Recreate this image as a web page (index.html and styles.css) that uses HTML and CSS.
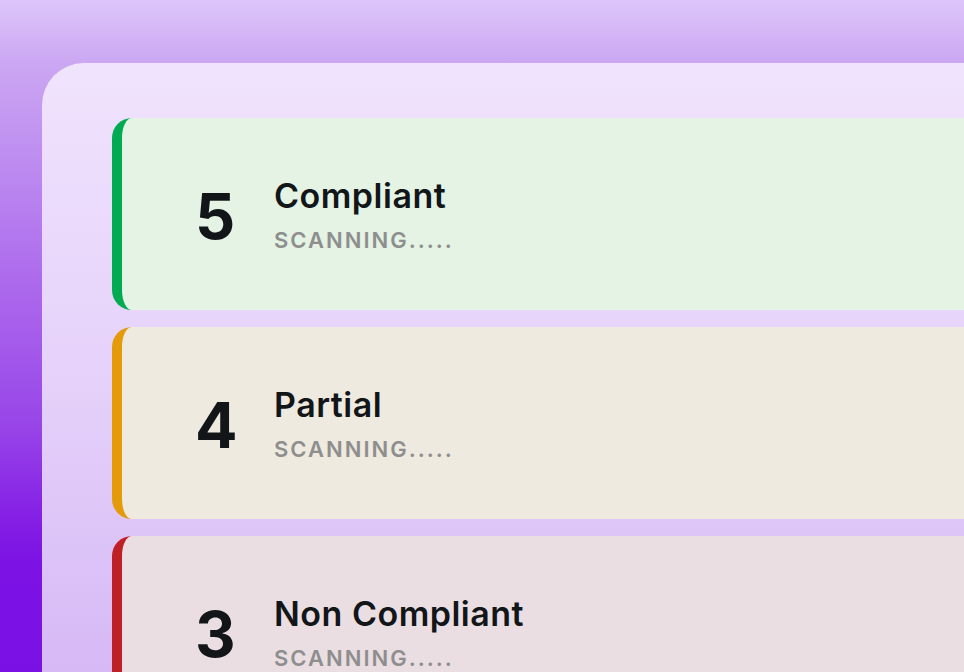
FILE: index.html
```html
<!DOCTYPE html>
<html lang="en">
<head>
<meta charset="utf-8">
<title>Compliance</title>
<link rel="stylesheet" href="styles.css">
</head>
<body>
<div class="stage">
  <div class="panel">
    <div class="card card-green">
      <div class="count">5</div>
      <div class="info">
        <div class="title">Compliant</div>
        <div class="status">SCANNING.....</div>
      </div>
    </div>
    <div class="card card-orange">
      <div class="count">4</div>
      <div class="info">
        <div class="title">Partial</div>
        <div class="status">SCANNING.....</div>
      </div>
    </div>
    <div class="card card-red">
      <div class="count">3</div>
      <div class="info">
        <div class="title">Non Compliant</div>
        <div class="status">SCANNING.....</div>
      </div>
    </div>
  </div>
</div>
</body>
</html>
```

FILE: styles.css
```css
html, body {
  margin: 0;
  padding: 0;
  width: 964px;
  height: 672px;
  overflow: hidden;
}
body {
  font-family: Inter, "Noto Sans", sans-serif;
  background: linear-gradient(180deg, #ddc5f9 0%, #cca8f3 9%, #bd8cf0 24%, #ab66ec 44%, #9846e8 63%, #8622e5 76%, #7c12e4 84%, #7a10e4 100%);
}
.stage {
  padding: 63px 0 0 42px;
  height: 672px;
  box-sizing: border-box;
}
.panel {
  height: 100%;
  border-top-left-radius: 42px;
  background: linear-gradient(180deg, #f0e4fd 0%, #ecdcfc 20%, #e6d2fa 50%, #dec6f8 75%, #d6b8f5 100%);
  padding: 55px 0 0 70px;
  box-sizing: border-box;
  display: flex;
  flex-direction: column;
  gap: 17px;
}
.card {
  height: 192px;
  flex: none;
  box-sizing: border-box;
  border-radius: 20px 0 0 20px;
  border-left: 10px solid;
  display: flex;
  align-items: center;
  padding-left: 73px;
}
.card-green { background: #e4f3e4; border-left-color: #00ab52; }
.card-orange { background: #eeeadf; border-left-color: #e39b0a; }
.card-red { background: #eadee2; border-left-color: #be2026; }
.count {
  width: 79px;
  font-size: 63px;
  font-weight: 700;
  color: #121619;
  line-height: 1;
  margin-top: 4px;
}
.info {
  display: flex;
  flex-direction: column;
  margin-top: 1px;
}
.title {
  font-size: 34px;
  font-weight: 600;
  color: #121619;
  line-height: 40px;
  letter-spacing: 0.5px;
}
.status {
  font-size: 22px;
  font-weight: 600;
  color: #8e8e8e;
  letter-spacing: 2px;
  line-height: 28px;
  margin-top: 10px;
}
```
